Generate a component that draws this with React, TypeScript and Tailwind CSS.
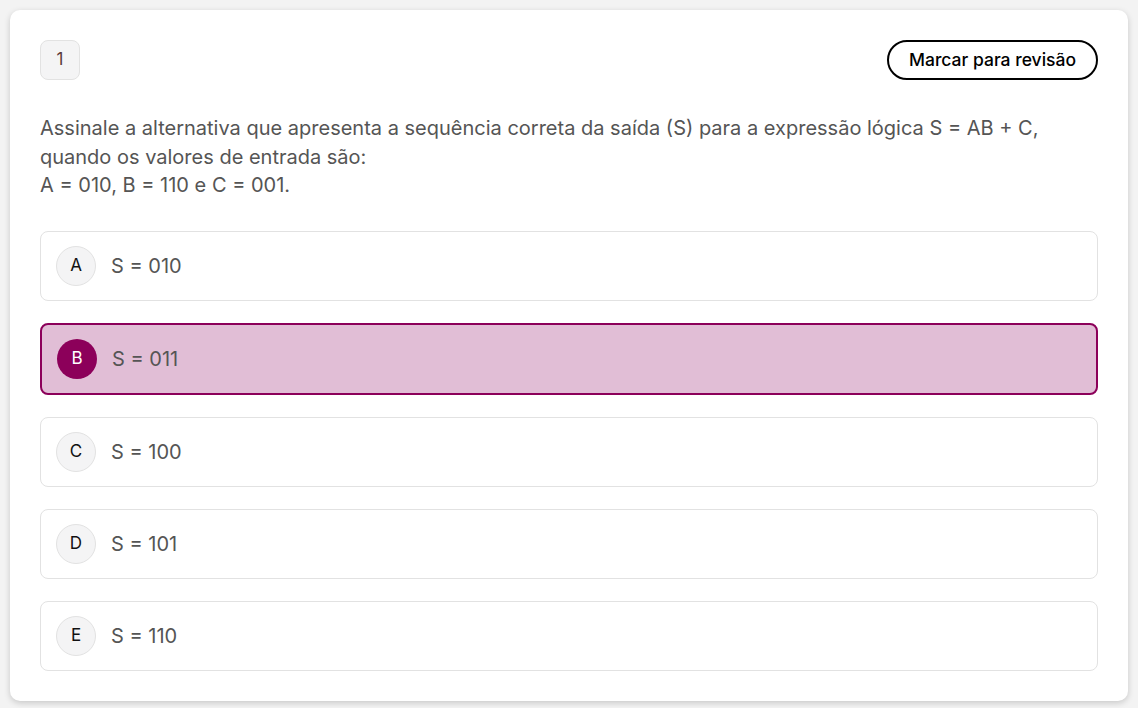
import React from 'react'

const options = [
  { letter: 'A', text: 'S = 010' },
  { letter: 'B', text: 'S = 011' },
  { letter: 'C', text: 'S = 100' },
  { letter: 'D', text: 'S = 101' },
  { letter: 'E', text: 'S = 110' },
]

const selected = 'B'

export default function App() {
  return (
    <div className="min-h-[708px] bg-[#f3f3f3] p-[10px] font-['Inter',sans-serif]">
      <div className="rounded-[10px] bg-white px-[30px] pt-[30px] pb-[30px] shadow-[0_2px_6px_rgba(0,0,0,0.18)]">
        <div className="flex items-center justify-between">
          <div className="flex h-10 w-10 items-center justify-center rounded-lg border border-[#e2e2e2] bg-[#f4f4f5] text-[17px] text-[#5a3a3a]">
            1
          </div>
          <button className="h-10 rounded-full border-2 border-black px-5 text-[17.5px] font-medium text-black">
            Marcar para revisão
          </button>
        </div>

        <p className="mt-[34px] text-[20px] leading-[28.5px] text-[#555]">
          Assinale a alternativa que apresenta a sequência correta da saída (S) para a expressão lógica S = AB + C,
          <br />
          quando os valores de entrada são:
          <br />
          A = 010, B = 110 e C = 001.
        </p>

        <div className="mt-[31px] flex flex-col gap-[22px]">
          {options.map((o) =>
            o.letter === selected ? (
              <div
                key={o.letter}
                className="flex items-center gap-[15px] rounded-lg border-2 border-[#8c005a] bg-[#e1bed6] px-[15px] py-[14px]"
              >
                <div className="flex h-10 w-10 items-center justify-center rounded-full bg-[#8c005a] text-[17px] text-white">
                  {o.letter}
                </div>
                <span className="text-[20px] leading-7 text-[#555]">{o.text}</span>
              </div>
            ) : (
              <div
                key={o.letter}
                className="flex items-center gap-[15px] rounded-lg border border-[#e2e2e2] bg-white px-[15px] py-[14px]"
              >
                <div className="flex h-10 w-10 items-center justify-center rounded-full border border-[#e2e2e2] bg-[#f4f4f5] text-[17px] text-[#111]">
                  {o.letter}
                </div>
                <span className="text-[20px] leading-7 text-[#555]">{o.text}</span>
              </div>
            )
          )}
        </div>
      </div>
    </div>
  )
}
